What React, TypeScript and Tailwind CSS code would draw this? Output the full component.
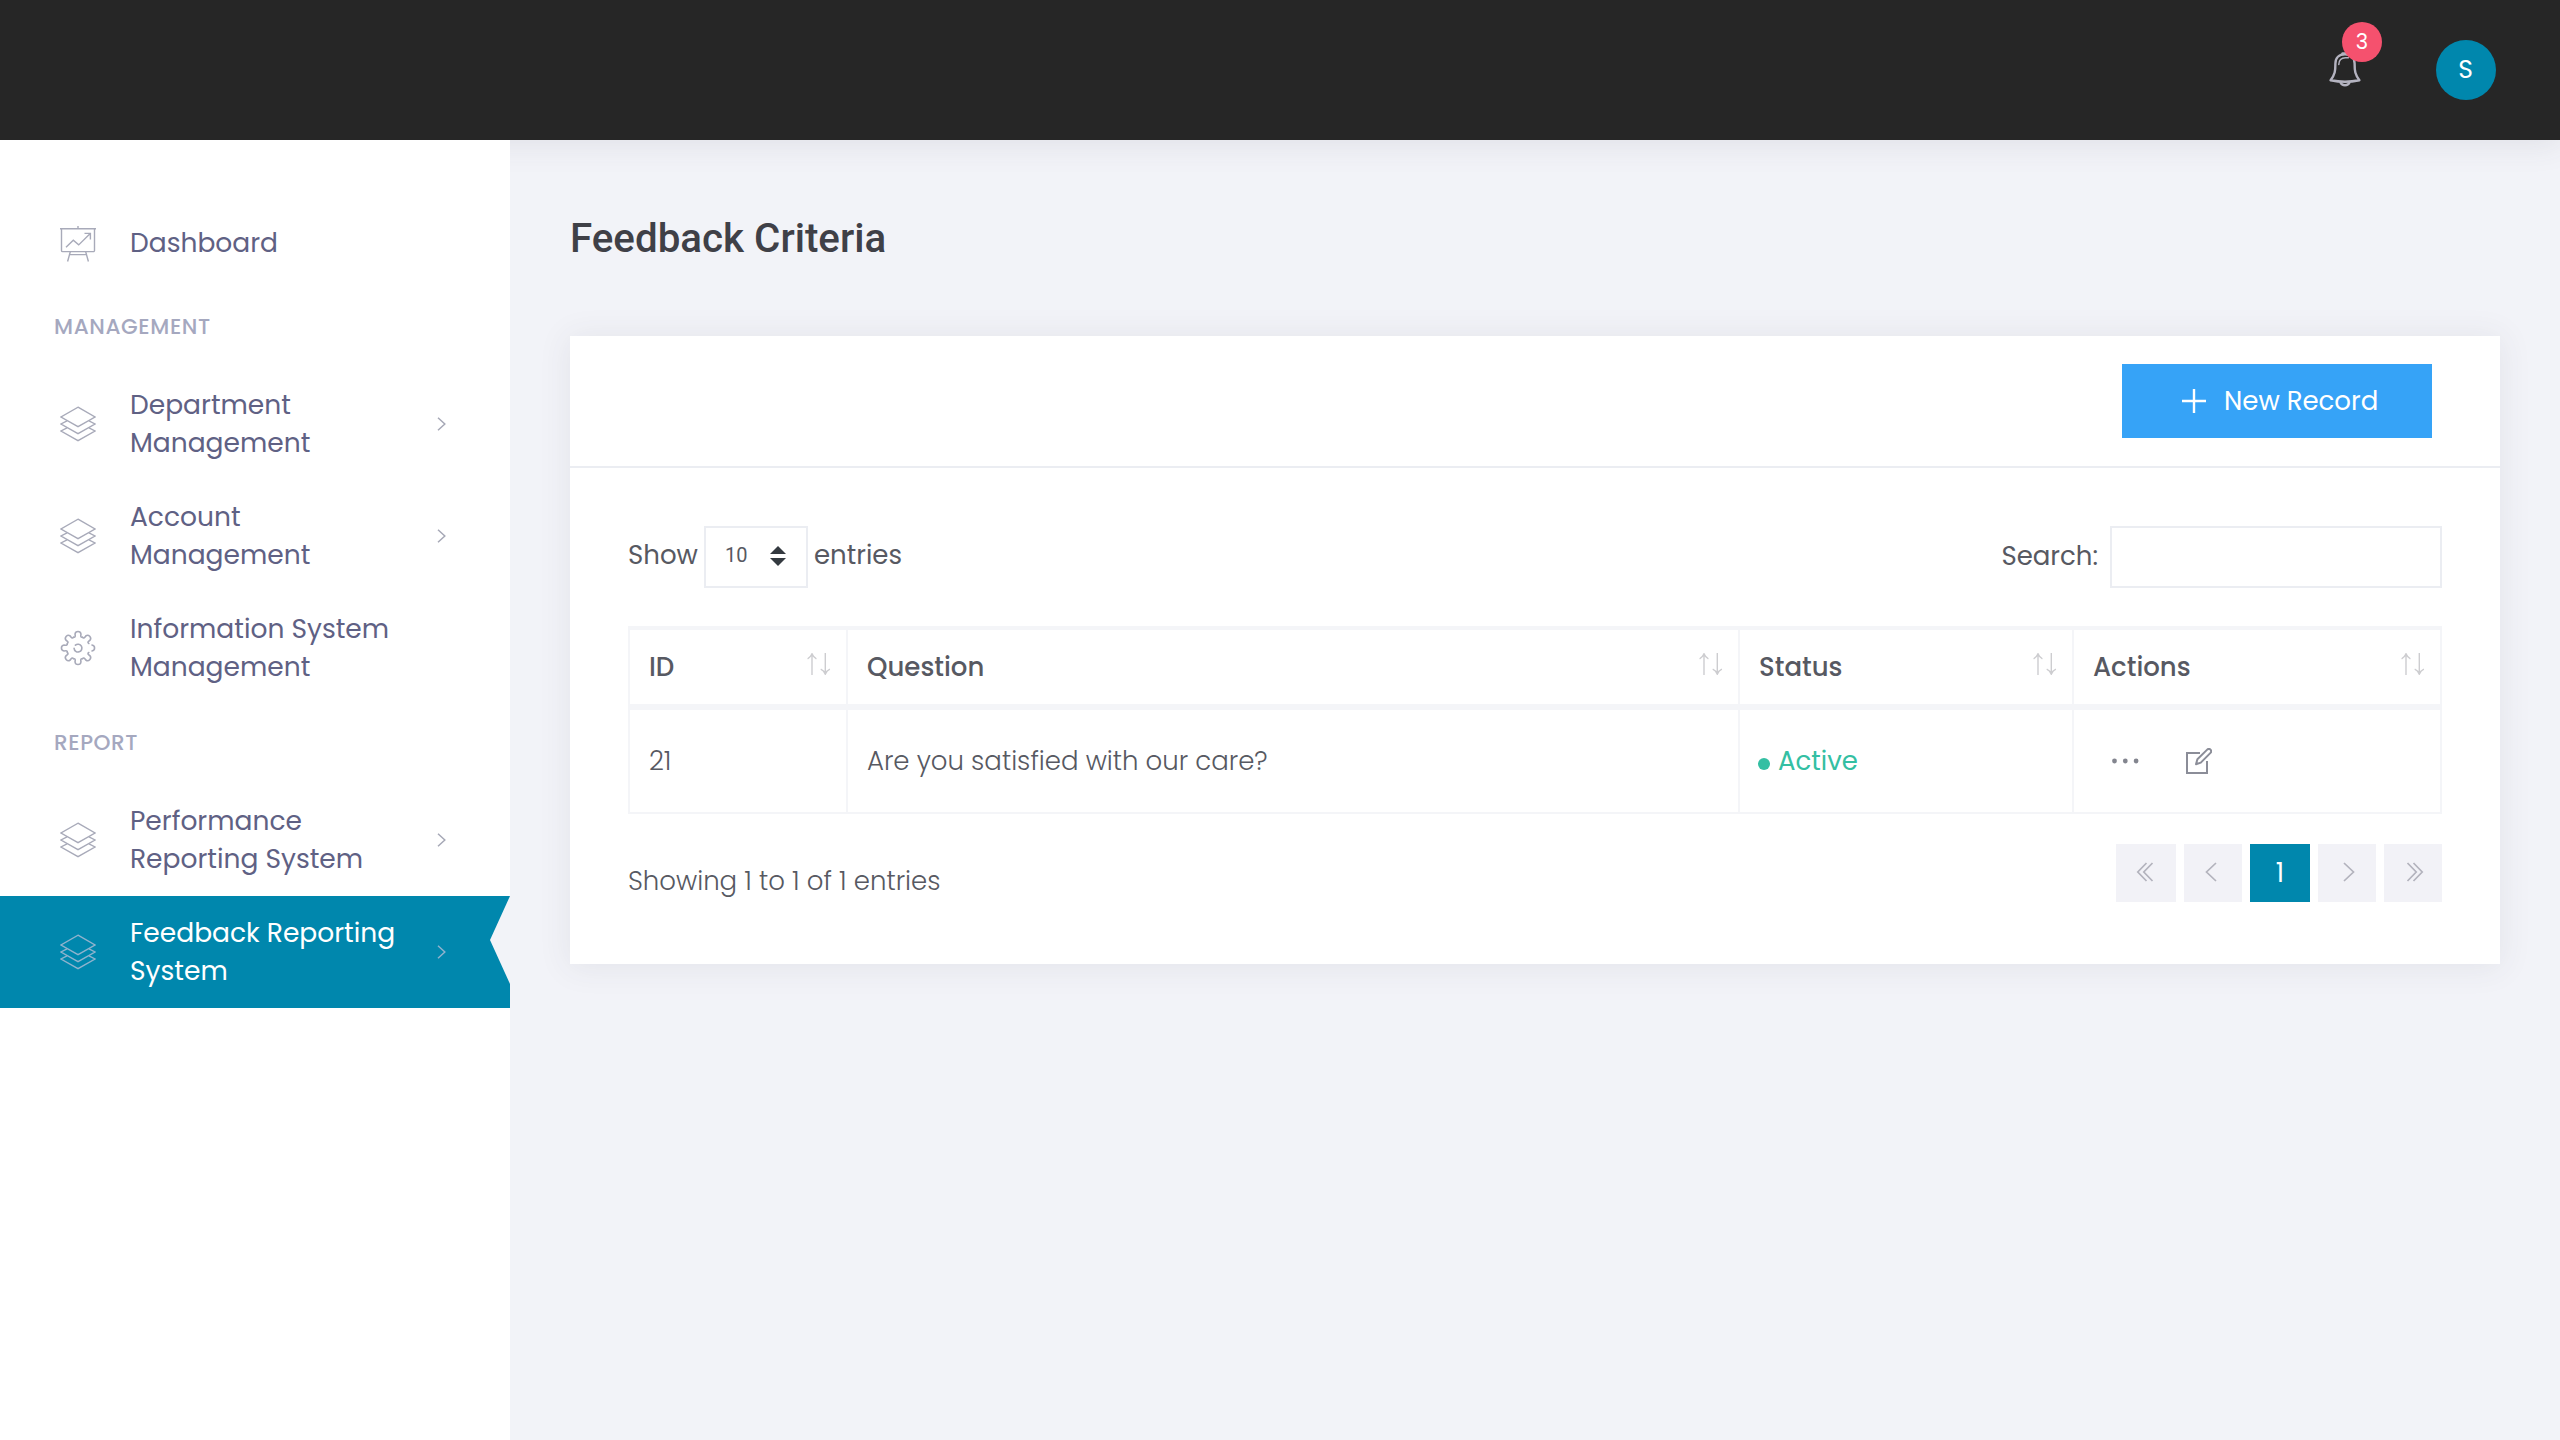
import React from 'react';

type IconProps = { className?: string };

function LayersIcon({ className = '' }: IconProps) {
  return (
    <svg className={className} width="36" height="36" viewBox="0 0 36 36" fill="none" stroke="currentColor" strokeWidth="1.4">
      <path d="M18 1.2 35 11 18 20.7 1 11Z" />
      <path d="M7 14.8 1 18l17 9.7L35 18l-6-3.2" />
      <path d="M7 21.8 1 25l17 9.7L35 25l-6-3.2" />
    </svg>
  );
}

function DashboardIcon({ className = '' }: IconProps) {
  return (
    <svg className={className} width="36" height="36" viewBox="0 0 36 36" fill="none" stroke="currentColor" strokeWidth="1.4">
      <path d="M0 2.8h36M18 0v2.8M1.5 2.8v21.6a1.2 1.2 0 0 0 1.2 1.2h30.6a1.2 1.2 0 0 0 1.2-1.2V2.8" />
      <path d="M10.3 25.8 7.6 35.5M25.7 25.8l2.7 9.7M9.6 28.6h16.8" />
      <path d="m6 21.3 7.3-7 5.4 4.6L30 7.8M24.5 7.4h5.9v6" />
    </svg>
  );
}

const LOBES = Array.from({ length: 8 }, (_, k) => {
  const at = (r: number, deg: number) => {
    const a = ((k * 45 + deg) * Math.PI) / 180;
    return (18 + r * Math.cos(a)).toFixed(2) + ' ' + (18 + r * Math.sin(a)).toFixed(2);
  };
  const lobe = 'M' + at(14.3, -12) + 'A3 3 0 0 1 ' + at(14.3, 12);
  return k === 0 ? lobe : lobe + 'Q' + at(10.3, 12) + ' ' + at(11.7, 22.5) + 'M' + at(14.3, -12) + 'Q' + at(10.3, -12) + ' ' + at(11.7, -22.5);
}).join('');

function GearIcon({ className = '' }: IconProps) {
  return (
    <svg className={className} width="36" height="36" viewBox="0 0 36 36" fill="none" stroke="currentColor" strokeWidth="1.6" strokeLinecap="round">
      <path d={LOBES} />
      <path d="M15.4 15.2A3.9 3.9 0 1 1 14.1 18.4" />
    </svg>
  );
}

function Chevron({ className = '' }: IconProps) {
  return (
    <svg className={className} width="10" height="14" viewBox="0 0 10 14" fill="none" stroke="currentColor" strokeWidth="1.5">
      <path d="m1 .8 6.8 6.2L1 13.2" />
    </svg>
  );
}

function BellIcon() {
  return (
    <svg width="32" height="36" viewBox="0 0 32 36" fill="none" stroke="#b4b3c0" strokeWidth="2.4" strokeLinejoin="round" strokeLinecap="round">
      <path d="M16 3.2c-6 0-9.6 3.7-9.6 9.3C6.4 20 6 23.500 1.600 29.200c4.500.9 9 1.500 14.400 1.500s9.900-.6 14.400-1.500C26 23.500 25.600 20 25.600 12.500c0-5.600-3.600-9.300-9.600-9.300Z" />
      <path d="M13.500 2.500h5" />
      <path d="M9.800 13.500c0-4 2.400-6.800 6.600-6.800h3" strokeWidth="1.500" />
      <path d="M11.500 31.500c1.600 3.600 7.400 3.600 9 0" />
    </svg>
  );
}

function SortIcon() {
  return (
    <svg width="24" height="22" viewBox="0 0 24 22" fill="none" stroke="#cdcdd0" strokeWidth="1.4">
      <path d="M5 22V.8M.6 5.800Q3.500 4.500 5 .8 6.500 4.500 9.400 5.800" />
      <path d="M18.300 0v21.200M13.700 16.200q3.100 1.300 4.600 5 1.500-3.700 4.600-5" />
    </svg>
  );
}

function EditIcon() {
  return (
    <svg width="26" height="26" viewBox="0 0 26 26" fill="none" stroke="#8b8d98" strokeWidth="2">
      <path d="M14 5H1v20h20V13" />
      <path d="M10 16.200l1.400-5 9.800-9.600a2.300 2.300 0 0 1 3.300 3.300l-9.700 9.700Z" strokeLinejoin="round" />
    </svg>
  );
}

type Item = { lines: string[]; icon: (p: IconProps) => React.ReactElement; arrow?: boolean; active?: boolean };

function MenuItem({ lines, icon: Icon, arrow, active }: Item) {
  return (
    <a className={active ? 'relative flex min-h-[88px] items-center bg-[#0087ad] py-[18px] pl-[60px] text-white' : 'relative flex min-h-[88px] items-center py-[18px] pl-[60px] text-[#5f6184]'}>
      <Icon className={active ? 'shrink-0 text-[#8fb3cd]' : 'shrink-0 text-[#a8aab9]'} />
      <span className={lines.length > 1 ? 'ml-[34px] w-[307px] text-[26.5px] leading-[38px] whitespace-nowrap' : '-mt-0.5 ml-[34px] w-[307px] text-[26.5px] leading-[38px] whitespace-nowrap'}>
        {lines.map((l) => (
          <span key={l} className="block">{l}</span>
        ))}
      </span>
      {arrow && <Chevron className={active ? '-mt-px text-[#8fb3cd]' : '-mt-px text-[#a6a8b6]'} />}
      {active && (
        <svg className="absolute top-0 right-0" width="20" height="88" viewBox="0 0 20 88">
          <path d="M20 0 0 44l20 44Z" fill="#f2f3f8" />
        </svg>
      )}
    </a>
  );
}

function Section({ children }: { children: string }) {
  return <div className="h-20 pl-[54px] text-[21.58px] leading-[77px] font-medium tracking-[0.6px] text-[#a5a8bf]">{children}</div>;
}

const TH = 'h-full flex items-center justify-between pl-[19px] pr-[15px] font-medium';

export default function App() {
  return (
    <div className="flex h-[1440px] w-[2560px] flex-col overflow-hidden bg-[#f2f3f8] font-['Poppins',sans-serif] text-[26px] text-[#575962]">
      <header className="relative z-10 flex h-[140px] shrink-0 items-center justify-end bg-[#262626] pr-16 shadow-[0_2px_30px_2px_rgba(69,65,78,0.1)]">
        <div className="relative mr-[75px] -mt-0.5">
          <BellIcon />
          <span className="absolute -top-[29px] left-[13px] flex size-10 items-center justify-center rounded-full bg-[#f5516e] pb-0.5 text-[21px] leading-none text-white">3</span>
        </div>
        <div className="flex size-[60px] items-center justify-center rounded-full bg-[#0087ad] pr-px text-[25px] text-white">S</div>
      </header>

      <div className="flex min-h-0 grow">
        <nav className="z-20 w-[510px] shrink-0 bg-white pt-[60px]">
          <MenuItem lines={['Dashboard']} icon={DashboardIcon} />
          <Section>MANAGEMENT</Section>
          <MenuItem lines={['Department', 'Management']} icon={LayersIcon} arrow />
          <MenuItem lines={['Account', 'Management']} icon={LayersIcon} arrow />
          <MenuItem lines={['Information System', 'Management']} icon={GearIcon} />
          <Section>REPORT</Section>
          <MenuItem lines={['Performance', 'Reporting System']} icon={LayersIcon} arrow />
          <MenuItem lines={['Feedback Reporting', 'System']} icon={LayersIcon} arrow active />
        </nav>

        <main className="grow px-[60px] pt-[69px]">
          <h1 className="h-[127px] font-['Roboto'] text-[40.3px] leading-[60px] font-medium text-[#3f4047]">Feedback Criteria</h1>

          <section className="h-[628px] bg-white shadow-[0_2px_30px_2px_rgba(69,65,78,0.08)]">
            <div className="flex h-[132px] items-start justify-end border-b-2 border-[#ebedf2] pt-7 pr-[68px]">
              <button className="flex h-[74px] w-[310px] items-center bg-[#36a3f7] pl-[60px] text-white">
                <svg width="24" height="24" viewBox="0 0 24 24" stroke="currentColor" strokeWidth="2.400">
                  <path d="M12 0v24M0 12h24" />
                </svg>
                <span className="ml-[18px]">New Record</span>
              </button>
            </div>

            <div className="px-[58px] pt-[58px]">
              <div className="flex h-[62px] justify-between leading-[58px]">
                <div className="flex font-normal">
                  <span className="w-[76px]">Show</span>
                  <div className="flex h-[62px] w-[104px] items-center justify-between border-2 border-[#ebedf2] pr-5 pl-[19px] font-['Roboto'] text-[20px] leading-none font-normal">
                    <span className="-mt-1">10</span>
                    <svg className="-mt-0.5" width="16" height="20" viewBox="0 0 16 20" fill="#343a40">
                      <path d="M8 0l8 8H0ZM8 20l8-8H0Z" />
                    </svg>
                  </div>
                  <span className="ml-1.5">entries</span>
                </div>
                <div className="flex font-normal">
                  <span className="mr-3 mt-px">Search:</span>
                  <div className="h-[62px] w-[332px] border-2 border-[#ebedf2]" />
                </div>
              </div>

              <div className="mt-[38px] border-2 border-[#f4f5f8] border-t-4">
                <div className="grid h-20 grid-cols-[218px_892px_334px_366px] divide-x-2 divide-[#f4f5f8] border-b-6 border-[#f4f5f8]">
                  {['ID', 'Question', 'Status', 'Actions'].map((h) => (
                    <div key={h} className={TH}>
                      <span>{h}</span>
                      <span className="-mt-1.5"><SortIcon /></span>
                    </div>
                  ))}
                </div>
                <div className="grid h-[102px] grid-cols-[218px_892px_334px_366px] divide-x-2 divide-[#f4f5f8] font-light">
                  <div className="flex items-center pl-[19px]">21</div>
                  <div className="flex items-center pl-[19px]">Are you satisfied with our care?</div>
                  <div className="flex items-center pl-[18px] font-normal text-[#34bfa3]">
                    <span className="mt-1.5 mr-2 size-3 rounded-full bg-[#34bfa3]" />
                    Active
                  </div>
                  <div className="flex items-center pl-[38px]">
                    <svg width="27" height="6" viewBox="0 0 27 6" fill="#83858f">
                      <circle cx="2.500" cy="3" r="2.400" /><circle cx="13.300" cy="3" r="2.400" /><circle cx="24.100" cy="3" r="2.400" />
                    </svg>
                    <span className="ml-[47px]"><EditIcon /></span>
                  </div>
                </div>
              </div>

              <div className="mt-[30px] flex justify-between font-light">
                <span className="pt-[17px] leading-[40px]">Showing 1 to 1 of 1 entries</span>
                <div className="flex h-[58px] gap-2 text-[#b3b3bd] [&>div]:flex [&>div]:items-center [&>div]:justify-center [&>div]:bg-[#f2f2f7]">
                  <div className="w-[60px]">
                    <svg className="-ml-0.5 -mt-0.5" width="18" height="20" viewBox="0 0 18 20" fill="none" stroke="currentColor" strokeWidth="1.700"><path d="M10.500 1 1.800 10l8.700 9M16.500 1 7.800 10l8.700 9" /></svg>
                  </div>
                  <div className="w-[58px]">
                    <svg className="-ml-1 -mt-0.5" width="12" height="20" viewBox="0 0 12 20" fill="none" stroke="currentColor" strokeWidth="1.700"><path d="M11 1 1.500 10l9.500 9" /></svg>
                  </div>
                  <div className="w-[60px] bg-[#0087ad]! font-normal text-white">1</div>
                  <div className="w-[58px]">
                    <svg className="ml-1 -mt-0.5" width="12" height="20" viewBox="0 0 12 20" fill="none" stroke="currentColor" strokeWidth="1.700"><path d="m1 1 9.500 9L1 19" /></svg>
                  </div>
                  <div className="w-[58px]">
                    <svg className="ml-1 -mt-0.5" width="18" height="20" viewBox="0 0 18 20" fill="none" stroke="currentColor" strokeWidth="1.700"><path d="m1.500 1 8.700 9-8.700 9M7.500 1l8.700 9-8.700 9" /></svg>
                  </div>
                </div>
              </div>
            </div>
          </section>
        </main>
      </div>
    </div>
  );
}
